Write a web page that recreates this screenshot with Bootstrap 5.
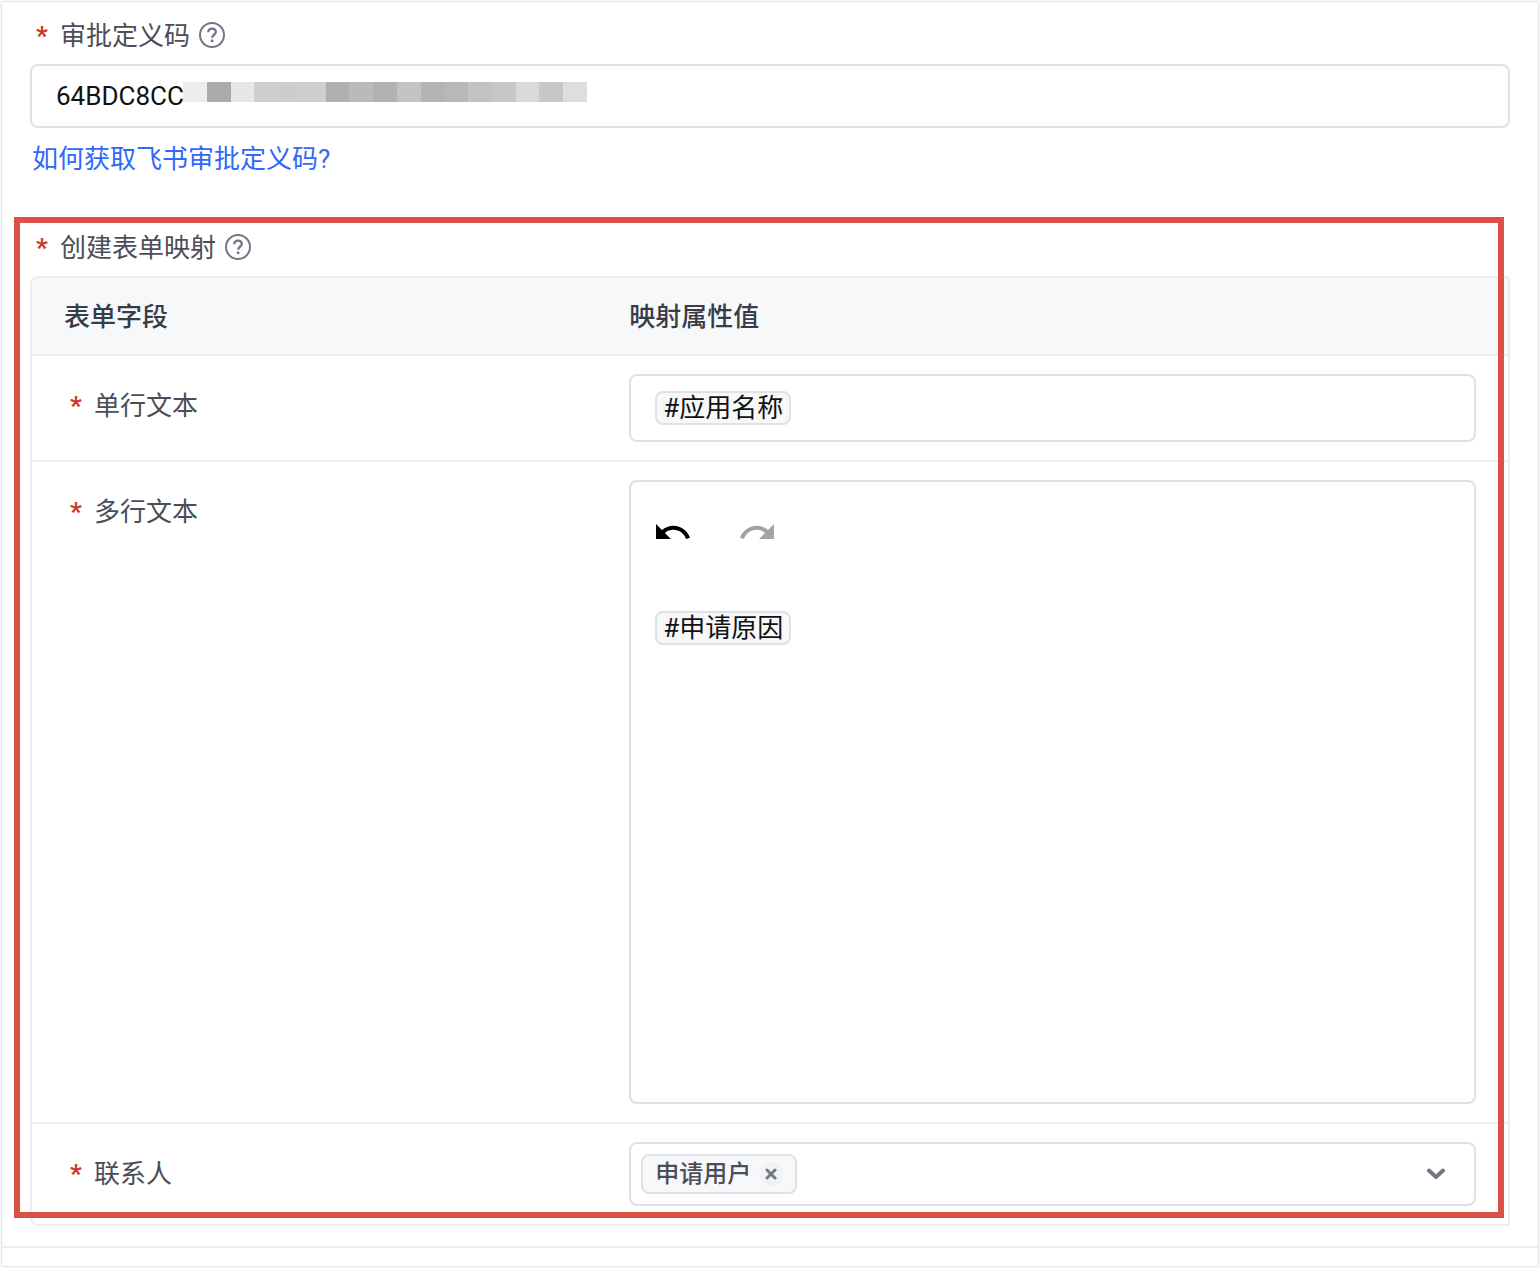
<!DOCTYPE html>
<html lang="zh-CN">
<head>
<meta charset="utf-8">
<meta name="viewport" content="width=device-width, initial-scale=1">
<title>审批表单映射</title>
<link href="https://cdn.jsdelivr.net/npm/bootstrap@5.3.0/dist/css/bootstrap.min.css" rel="stylesheet">
<style>
  body { font-family: Roboto, "Noto Sans CJK SC", sans-serif; font-size: 26px; line-height: 40px; color: #4b4e58; background: #fafafa; }
  .panel { margin: 2px; padding-top: 14px; padding-bottom: 18px; background: #fff; border-radius: 2px; box-shadow: 0 0 2px rgba(0,0,0,.3); }
  .panel-body { padding: 0 28px 20px; border-bottom: 2px solid #ebedf2; }
  .field-label { display: flex; align-items: center; gap: 12px; padding-left: 6px; color: #4b4e58; }
  .req { width: 12px; color: #cb3a2c; font-weight: 700; }
  .help { margin-left: -3px; padding-bottom: 2px; color: #717785; }
  .box { border: 2px solid #dde1e8; border-radius: 8px; background: #fff; color: #111; }
  .code-input { height: 64px; padding: 0 24px; font-size: 26px; box-shadow: none; }
  .mask { left: 153px; top: 18px; width: 404px; height: 20px; }
  .doc-link { color: #3068fa; padding-left: 2px; margin-top: 11px; }
  .mapping { margin-top: 49px; }
  .outline { top: -11px; left: -16px; right: 6px; bottom: 8px; border: 6px solid #dc5046; pointer-events: none; }
  .map-frame { border: 2px solid #ebedf2; border-radius: 8px 2px 2px 8px; overflow: hidden; }
  .map-table { width: 100%; table-layout: fixed; border-collapse: separate; border-spacing: 0; }
  .map-table col:first-child { width: 38.3%; }
  .map-table th { padding: 18px 32px 16px; background: #f7f8fa; color: #373c47; font-weight: 500; border-bottom: 2px solid #ebedf2; }
  .map-table td { padding: 18px 32px; vertical-align: top; border-bottom: 2px solid #ebedf2; }
  .map-table td:first-child { padding-top: 30px; }
  .map-table tr:last-child td { border-bottom: 0; }
  .map-table th { height: 78px; vertical-align: middle; }
  .single { height: 68px; padding: 0 24px; }
  .multi { height: 624px; padding: 24px; }
  .toolbar { height: 50px; gap: 48px; margin-bottom: 55px; }
  .tool { width: 36px; height: 36px; padding: 0; border: 0; background: none; color: #000; }
  .tool:disabled { color: #a3a3a3; }
  .tool svg, .help svg, .clear svg, .arrow svg { display: block; margin: auto; }
  .token { display: inline-block; height: 34px; line-height: 30px; padding: 0 6px; border: 2px solid #dde1e8; border-radius: 8px; background: #f7f8fa; }
  .picker { height: 64px; padding: 0 24px 0 10px; }
  .chip { height: 40px; line-height: 36px; padding: 0 12px; gap: 8px; font-size: 24px; font-weight: 500; color: #4b4e58; border: 2px solid #dde1e8; border-radius: 8px; background: #f7f8fa; }
  .clear { width: 24px; height: 24px; padding: 0; border: 0; border-radius: 50%; background: #f1f2f3; color: #717785; }
  .arrow { width: 28px; height: 28px; padding: 0; border: 0; background: none; color: #717785; }
</style>
</head>
<body>
<main class="panel">
  <div class="panel-body">
    <div class="field-label mb-2">
      <span class="req">*</span><label for="code">审批定义码</label>
      <span class="help"><svg width="26" height="26" viewBox="0 0 26 26" fill="none" stroke="currentColor" stroke-width="2"><circle cx="13" cy="13" r="12"/><path d="M9.2 10.3C9.2 8 10.8 6.6 13 6.6s3.8 1.4 3.8 3.4c0 2.7-3.7 2.8-3.7 5.8" stroke-width="2.3"/><circle cx="13.1" cy="18.8" r="1.5" fill="currentColor" stroke="none"/></svg></span>
    </div>
    <div class="position-relative">
      <input id="code" class="box code-input form-control" type="text" value="64BDC8CC">
      <svg class="mask position-absolute" viewBox="0 0 17 1" preserveAspectRatio="none" shape-rendering="crispEdges" aria-hidden="true">
        <path fill="#ededed" d="M0 0h1v1H0z"/><path fill="#ababab" d="M1 0h1v1H1z"/><path fill="#e6e6e6" d="M2 0h1v1H2z"/><path fill="#cfcfcf" d="M3 0h1v1H3z"/><path fill="#cdcdcd" d="M4 0h1v1H4z"/><path fill="#cdd0cf" d="M5 0h1v1H5z"/><path fill="#b0b0b0" d="M6 0h1v1H6z"/><path fill="#bababa" d="M7 0h1v1H7z"/><path fill="#b1b1b1" d="M8 0h1v1H8z"/><path fill="#c1c4c3" d="M9 0h1v1H9z"/><path fill="#b3b3b3" d="M10 0h1v1h-1z"/><path fill="#b8b8b8" d="M11 0h1v1h-1z"/><path fill="#c2c2c2" d="M12 0h1v1h-1z"/><path fill="#c6c6c6" d="M13 0h1v1h-1z"/><path fill="#d9d9d9" d="M14 0h1v1h-1z"/><path fill="#c7c7c7" d="M15 0h1v1h-1z"/><path fill="#dedede" d="M16 0h1v1h-1z"/>
      </svg>
    </div>
    <a class="doc-link d-block text-decoration-none" href="#">如何获取飞书审批定义码?</a>

    <section class="mapping position-relative">
      <div class="field-label mb-2">
        <span class="req">*</span><span id="map-title">创建表单映射</span>
        <span class="help"><svg width="26" height="26" viewBox="0 0 26 26" fill="none" stroke="currentColor" stroke-width="2"><circle cx="13" cy="13" r="12"/><path d="M9.2 10.3C9.2 8 10.8 6.6 13 6.6s3.8 1.4 3.8 3.4c0 2.7-3.7 2.8-3.7 5.8" stroke-width="2.3"/><circle cx="13.1" cy="18.8" r="1.5" fill="currentColor" stroke="none"/></svg></span>
      </div>
      <div class="map-frame">
        <table class="map-table" aria-labelledby="map-title">
          <colgroup><col><col></colgroup>
          <thead><tr><th scope="col">表单字段</th><th scope="col">映射属性值</th></tr></thead>
          <tbody>
            <tr>
              <td><div class="field-label"><span class="req">*</span><span id="f1">单行文本</span></div></td>
              <td><div class="box single d-flex align-items-center" role="textbox" contenteditable="true" spellcheck="false" aria-labelledby="f1"><span class="token">#应用名称</span></div></td>
            </tr>
            <tr>
              <td><div class="field-label"><span class="req">*</span><span id="f2">多行文本</span></div></td>
              <td>
                <div class="box multi">
                  <div class="toolbar d-flex align-items-center">
                    <button class="tool" type="button" aria-label="撤销"><svg width="34" height="15" viewBox="2 7 20.5 9" fill="currentColor"><path d="M12.5 8c-2.65 0-5.05.99-6.9 2.6L2 7v9h9l-3.62-3.62c1.39-1.16 3.16-1.88 5.12-1.88 3.54 0 6.55 2.31 7.6 5.5l2.37-.78C21.08 11.03 17.15 8 12.5 8z"/></svg></button>
                    <button class="tool" type="button" aria-label="重做" disabled><svg width="34" height="15" viewBox="1.5 7 20.5 9" fill="currentColor"><path d="M18.4 10.6C16.55 8.99 14.15 8 11.5 8c-4.65 0-8.58 3.03-9.96 7.22L3.9 16c1.05-3.19 4.05-5.5 7.6-5.5 1.95 0 3.73.72 5.12 1.88L13 16h9V7l-3.6 3.6z"/></svg></button>
                  </div>
                  <div class="d-flex" role="textbox" aria-multiline="true" contenteditable="true" spellcheck="false" aria-labelledby="f2"><span class="token">#申请原因</span></div>
                </div>
              </td>
            </tr>
            <tr>
              <td><div class="field-label"><span class="req">*</span><span id="f3">联系人</span></div></td>
              <td>
                <div class="box picker d-flex align-items-center justify-content-between" role="group" aria-labelledby="f3">
                  <span class="chip d-flex align-items-center">申请用户
                    <button class="clear" type="button" aria-label="移除"><svg width="12" height="12" viewBox="0 0 12 12" fill="none" stroke="currentColor" stroke-width="3" stroke-linecap="round"><path d="M2 2l8 8M10 2l-8 8"/></svg></button>
                  </span>
                  <button class="arrow" type="button" aria-label="展开"><svg width="18" height="12" viewBox="0 0 18 12" fill="none" stroke="currentColor" stroke-width="4" stroke-linecap="round" stroke-linejoin="round"><path d="M2 2.5l7 6.5 7-6.5"/></svg></button>
                </div>
              </td>
            </tr>
          </tbody>
        </table>
      </div>
      <div class="outline position-absolute"></div>
    </section>
  </div>
</main>
<script src="https://cdn.jsdelivr.net/npm/bootstrap@5.3.0/dist/js/bootstrap.bundle.min.js"></script>
</body>
</html>
